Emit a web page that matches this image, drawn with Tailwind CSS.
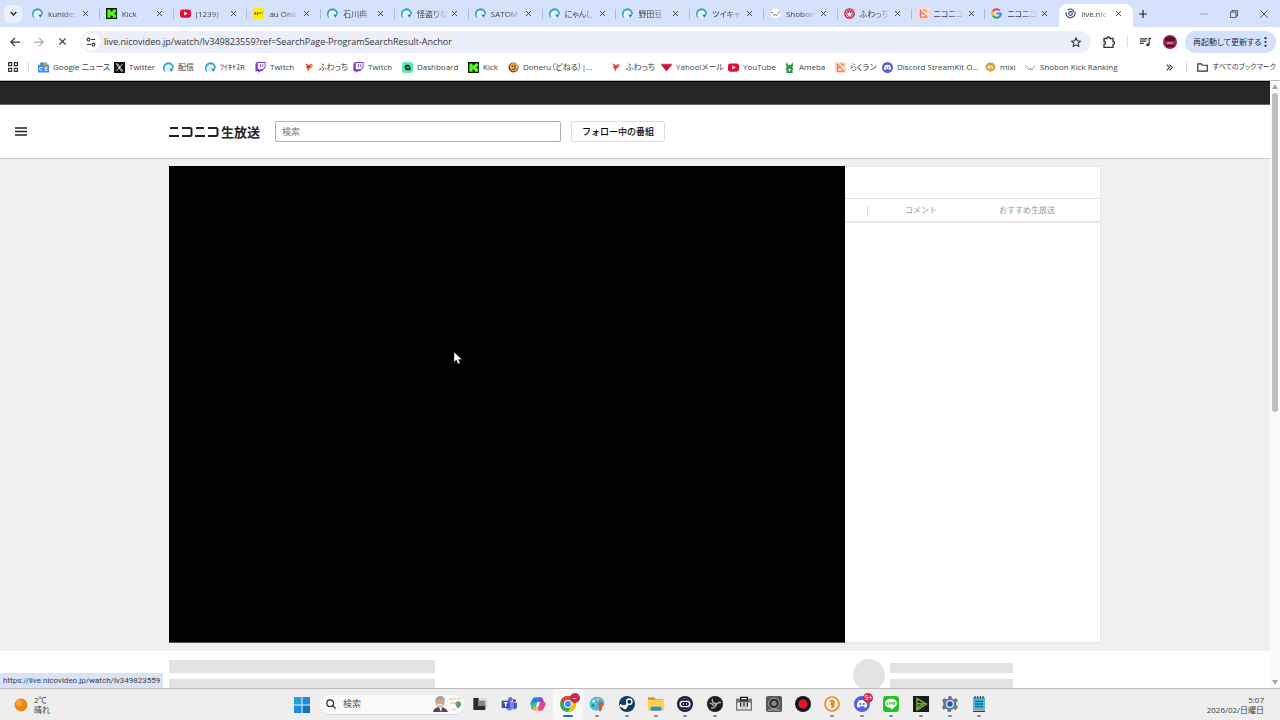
<!DOCTYPE html>
<html lang="ja">
<head>
  <meta charset="UTF-8">
  <meta name="viewport" content="width=device-width, initial-scale=1.0">
  <title>ニコニコ生放送</title>
  <script src="https://cdn.jsdelivr.net/npm/@tailwindcss/browser@4"></script>
</head>
<body class="h-screen flex flex-col overflow-hidden bg-white text-[#3c4043] font-['Open_Sans','Noto_Sans_CJK_JP',sans-serif]">

  <!-- icon sprite -->
  <svg class="hidden" xmlns="http://www.w3.org/2000/svg">
    <symbol id="cast" viewBox="0 0 24 24"><circle cx="12" cy="12" r="11" fill="#dff1f8"/><path d="M5 20A10 10 0 1 1 22 13" fill="none" stroke="#2fa3cc" stroke-width="4"/><path d="M6 19c-3-5 0-11 6-11 4 0 6 3 6 6" fill="none" stroke="#fff" stroke-width="3"/><path d="M14 14h9l-5 7z" fill="#1d86b0"/></symbol>
    <symbol id="kick" viewBox="0 0 24 24"><path fill="#0b1a08" d="M0 0h24v24H0z"/><path fill="#53fc18" d="M3 3h7v5h2V6h3V3h7v7h-3v4h3v7h-7v-3h-3v-2h-2v5H3z"/></symbol>
    <symbol id="youtube" viewBox="0 0 24 24"><rect x="0" y="3" width="24" height="18" rx="5" fill="#e0103a"/><path fill="#fff" d="M9 7.500v9l8-4.500z"/></symbol>
    <symbol id="au" viewBox="0 0 24 24"><path fill="#fff200" d="M0 0h24v24H0z"/><path d="M3 11h4m2 0h3m2 0h3m2 0h2M3 14h2m3 0h3" stroke="#9b5a00" stroke-width="3"/></symbol>
    <symbol id="shobon" viewBox="0 0 24 24"><circle cx="12" cy="12" r="11" fill="#fff"/><path d="M3 9l4 2M21 9l-4 2M7 14c2 3 4 2 5 0 1 2 3 3 5 0" fill="none" stroke="#555" stroke-width="2"/></symbol>
    <symbol id="shobon-flat" viewBox="0 0 24 24"><path d="M2 8l4 4M22 8l-4 4M6 14c2 4 5 3 6 0 1 3 4 4 6 0" fill="none" stroke="#666" stroke-width="2"/></symbol>
    <symbol id="whowatch" viewBox="0 0 24 24"><circle cx="12" cy="12" r="11.500" fill="#c21440"/><circle cx="12" cy="12" r="8" fill="none" stroke="#fff" stroke-width="1.500"/><path fill="#fff" d="M7 9l3 2 2-4 2 4 3-2-1 8H8z"/></symbol>
    <symbol id="rakuran" viewBox="0 0 24 24"><path fill="#ffdccd" d="M0 0h24v24H0z"/><path d="M5 20V4l15 16zM4 14l8-3M12 3l6 5" fill="none" stroke="#d0584b" stroke-width="2"/><path d="M16 4l4 4" stroke="#f2a52c" stroke-width="3"/></symbol>
    <symbol id="google" viewBox="0 0 24 24"><g fill="none" stroke-width="4.500"><path d="M19 5.500A9.500 9.500 0 0 0 4 7.500" stroke="#ea4335"/><path d="M4 7.500a9.500 9.500 0 0 0 0 9" stroke="#fbbc05"/><path d="M4 16.500a9.500 9.500 0 0 0 14 3" stroke="#34a853"/><path d="M18 19.500c2.500-2 3.500-4.500 3.300-7.500H12" stroke="#4285f4"/></g></symbol>
    <symbol id="nico" viewBox="0 0 24 24"><g fill="none" stroke="#334a86" stroke-width="2.500"><path d="M2 9c0 8 5 12 10 12 6 0 11-5 10-13"/><path d="M6 4c6-4 13-1 13 5"/><circle cx="12" cy="12" r="4"/></g></symbol>
    <symbol id="news" viewBox="0 0 24 24"><path fill="#3a9b58" d="M5 1h14v8H5z"/><path fill="#f5b92e" d="M12 2l10 2v6H12z"/><rect y="6" width="24" height="17" rx="2" fill="#4285f4"/><path d="M10 12H6a3 3 0 1 0 3 4M14 11h7M14 14.500h6M14 18h7" fill="none" stroke="#fff" stroke-width="2"/></symbol>
    <symbol id="x" viewBox="0 0 24 24"><path fill="#111" d="M0 0h24v24H0z"/><path d="M5 4h3l11 16h-3zM19 4L5 20" fill="none" stroke="#ddd" stroke-width="2"/></symbol>
    <symbol id="twitch" viewBox="0 0 24 24"><path fill="#7a36d9" d="M5 0L1 4v16h6v4l4-4h4l8-8V0z"/><path fill="#fff" d="M6 2h15v9l-4 4h-4l-3 3v-3H6z"/><path fill="#7a36d9" d="M11 5h2v6h-2zm5 0h2v6h-2z"/></symbol>
    <symbol id="fuwa" viewBox="0 0 24 24"><path fill="#e23b2e" d="M4 4l6 3 8-4-3 6 5 1-8 4-2 7-3-7-3-3 3-2z"/><path d="M13 10l6-4M8 16l2 4" stroke="#f49a3f" stroke-width="3"/><path d="M4 4l4 3" stroke="#7c2d2d" stroke-width="2"/></symbol>
    <symbol id="dash" viewBox="0 0 24 24"><rect width="24" height="24" rx="5" fill="#66e8b3"/><path fill="#134638" d="M5 11l3-5h7l4 5v7H8z"/><path d="M10 12h6" stroke="#66e8b3" stroke-width="2"/></symbol>
    <symbol id="doneru" viewBox="0 0 24 24"><circle cx="12" cy="12" r="11" fill="#713b55"/><circle cx="13" cy="11" r="9" fill="#f3b53c"/><path d="M8 7l3 3M16 6l-2 5M8 15c4 3 8 0 9-3" fill="none" stroke="#713b55" stroke-width="2.500"/></symbol>
    <symbol id="ymail" viewBox="0 0 24 24"><path fill="#e7a4b5" d="M0 3h24v5L12 20 0 8z"/><path fill="#c8143f" d="M0 5h24L12 20z"/></symbol>
    <symbol id="ameba" viewBox="0 0 24 24"><path fill="#2d8c3c" d="M6 0l2 6h8l2-6 2 7-2 5 3 4-3 2 1 6H5l1-6-3-3 3-4-2-5z"/><path d="M9 9h1m4 0h1M8 17h8M12 14v7" stroke="#fff" stroke-width="2"/></symbol>
    <symbol id="discord" viewBox="0 0 24 24"><circle cx="12" cy="12" r="12" fill="#5560dc"/><path fill="#fff" d="M7 7c3-1.500 7-1.500 10 0 2 3 3 6 2.500 9-1.500 1-2.500 1.500-3.500 1.500l-1-2h-6l-1 2c-1 0-2-.5-3.500-1.500C4 13 5 10 7 7z"/><circle cx="9.500" cy="12" r="1.600" fill="#5560dc"/><circle cx="14.500" cy="12" r="1.600" fill="#5560dc"/></symbol>
    <symbol id="mixi" viewBox="0 0 24 24"><path fill="#d7a53c" d="M12 1c7 0 11 4 11 10s-4 9-9 9l-3 3v-3C5 20 1 17 1 11S5 1 12 1z"/><path d="M7 15V9m0 1c2-2 4-1 4 1v4m0-4c1-2 5-3 5 0v4" fill="none" stroke="#fff" stroke-width="2"/></symbol>
    <symbol id="close" viewBox="0 0 10 10"><path d="M1.500 1.500l7 7M8.500 1.500l-7 7" fill="none" stroke="currentColor" stroke-width="1.300"/></symbol>

    <!-- taskbar apps -->
    <symbol id="t-task" viewBox="0 0 24 24"><path fill="#dcdcdc" d="M9 3h14v14H9z"/><path fill="#2b2b2b" d="M2 3h8v11h10v7H2z"/><path fill="#888" d="M9 7h11v8H9z"/></symbol>
    <symbol id="t-teams" viewBox="0 0 24 24"><circle cx="14" cy="5" r="3.500" fill="#6a6fd6"/><circle cx="20" cy="7" r="2.500" fill="#5156b8"/><path fill="#5156b8" d="M17 10h7v6a4 4 0 0 1-5 4z"/><path fill="#7b80e6" d="M8 9h11v8a6 6 0 0 1-11 2z"/><path fill="#4047a8" d="M1 7h12v11H1z"/><path d="M4 10h6M7 10v6" stroke="#fff" stroke-width="2"/></symbol>
    <symbol id="t-copilot" viewBox="0 0 24 24"><path fill="#1a8be0" d="M8 2h7l-4 12H3c-3 0-3-2-2-4l3-6c1-1 2-2 4-2z"/><path fill="#3cc391" d="M3 10h8l-2 7c-1 3-2 4-4 4H4c-3-2-3-8-1-11z"/><path fill="#f9b233" d="M6 16h6l-1 5c-3 2-6 1-7-1z"/><path fill="#7a4fd8" d="M13 2h3c2 0 3 1 4 4l1 3h-8z"/><path fill="#e2498d" d="M13 9h8c3 0 3 3 2 5l-3 6c-1 2-2 2-4 2h-4z"/><path fill="#eee" d="M11 9h4l-2 6h-4z"/></symbol>
    <symbol id="t-chrome" viewBox="0 0 24 24"><circle cx="12" cy="12" r="12" fill="#34a853"/><path fill="#ea4335" d="M1.600 6A12 12 0 0 1 22.400 6H12a6 6 0 0 0-5.200 9z"/><path fill="#fbbc05" d="M22.400 6A12 12 0 0 1 12 24l5.200-9A6 6 0 0 0 17 8.500V6z"/><circle cx="12" cy="12" r="6" fill="#fff"/><circle cx="12" cy="12" r="4.500" fill="#4285f4"/></symbol>
    <symbol id="t-paint" viewBox="0 0 24 24"><path fill="#45bfdc" d="M12 1c7 0 12 5 11 11-1 5-6 2-7 5s-1 5-5 5C5 22 0 17 1 11 2 5 6 1 12 1z"/><circle cx="7" cy="8" r="2" fill="#fff"/><circle cx="13" cy="5" r="2" fill="#f6c744"/><circle cx="6" cy="14" r="2" fill="#3d8b50"/><path fill="#b9694a" d="M17 8c3 0 5 3 4 6l-3 9h-3l-1-9c0-3 1-6 3-6z"/></symbol>
    <symbol id="t-steam" viewBox="0 0 24 24"><circle cx="12" cy="12" r="12" fill="#123a63"/><path d="M1 14l8 3 5-6" fill="none" stroke="#fff" stroke-width="4"/><circle cx="15.500" cy="8.500" r="4" fill="#123a63" stroke="#fff" stroke-width="2"/><circle cx="9" cy="17" r="3" fill="#fff"/></symbol>
    <symbol id="t-folder" viewBox="0 0 24 24"><path fill="#d99a1e" d="M0 2h9l3 3h11v5H0z"/><path fill="#ffd152" d="M0 6h24v16H0z"/><path fill="#2d8cc8" d="M4 16h16v6H4z"/></symbol>
    <symbol id="t-goggle" viewBox="0 0 24 24"><circle cx="12" cy="12" r="12" fill="#17192e"/><circle cx="12" cy="12" r="8.500" fill="none" stroke="#7479a8"/><rect x="5" y="8" width="14" height="8" rx="4" fill="none" stroke="#fff" stroke-width="2"/><path d="M9 12h1.500m3 0H15" stroke="#fff" stroke-width="2"/></symbol>
    <symbol id="t-obs" viewBox="0 0 24 24"><circle cx="12" cy="12" r="12" fill="#1c1c1e"/><g fill="none" stroke="#b5b5b5" stroke-width="2"><path d="M8 4c-1 5 2 8 6 7M21 10c-5-1-8 2-8 6M6 18c4 1 7-2 7-6M4 11c3 0 5 1 6 4"/></g></symbol>
    <symbol id="t-piano" viewBox="0 0 24 24"><path fill="#777" d="M0 4h24v18H0z"/><path fill="#eee" d="M2 10h20v10H2z"/><path fill="#222" d="M6 1h12v7H6zM6 10h2v6H6zm5 0h2v6h-2zm5 0h2v6h-2z"/><path d="M8 4h8" stroke="#fff" stroke-width="2"/><path d="M9.500 16v4m5-4v4" stroke="#777"/></symbol>
    <symbol id="t-mixer" viewBox="0 0 24 24"><rect width="24" height="24" rx="3" fill="#55585c"/><circle cx="12" cy="11" r="8" fill="#2c2e31" stroke="#aaa" stroke-width="1.500"/><circle cx="12" cy="11" r="4" fill="#85888c"/><path d="M3 21h18" stroke="#bbb" stroke-width="1.500"/></symbol>
    <symbol id="t-rec" viewBox="0 0 24 24"><circle cx="12" cy="12" r="12" fill="#151515"/><circle cx="12" cy="12" r="7" fill="#e3142b"/></symbol>
    <symbol id="t-coin" viewBox="0 0 24 24"><circle cx="12" cy="12" r="10.500" fill="#fff1df" stroke="#df8b35" stroke-width="2.500"/><path fill="#df8b35" d="M8 7c2-3 8-2 8 1v5c0 3-2 5-5 6v-6H8l3-3z"/></symbol>
    <symbol id="t-line" viewBox="0 0 24 24"><rect width="24" height="24" rx="5" fill="#20c31f"/><path fill="#fff" d="M12 4c5 0 9 3 9 7 0 5-6 7-9 10v-3c-5 0-9-3-9-7s4-7 9-7z"/><path d="M6.500 9v4H8m2-4v4m2 0V9l3 4V9m3 0h-1.500v4H18m-1.500-2H18" fill="none" stroke="#20c31f" stroke-width="1.200"/></symbol>
    <symbol id="t-play" viewBox="0 0 24 24"><path fill="#191b16" d="M0 0h24v24H0z"/><path d="M6 4l14 8L6 21zM6 11l9 1-9 6" fill="none" stroke="#7bc143" stroke-width="2"/></symbol>
    <symbol id="t-gear" viewBox="0 0 24 24"><path fill="#66788c" d="M10 0h4l1 4 3 1 3-2 3 4-3 3v3l3 3-3 5-4-2-3 2-1 3h-4l-1-4-3-1-3 2-2-4 2-3v-4L0 7l3-4 3 2 3-1z"/><circle cx="12" cy="12" r="6" fill="#dce8f5"/><circle cx="12" cy="12" r="4" fill="#265ba8"/></symbol>
    <symbol id="t-note" viewBox="0 0 24 24"><path fill="#47bfdc" d="M3 2h18v19H3z"/><path d="M6 0v4m4-4v4m4-4v4m4-4v4" stroke="#222" stroke-width="1.500"/><path d="M6 8h12M6 12h12M6 16h12" stroke="#0e6687" stroke-width="2"/><path fill="#7b2032" d="M3 22h18v2H3z"/></symbol>
  </svg>

  <!-- tab strip -->
  <header class="shrink-0 bg-white [font-feature-settings:'palt']">
    <div class="bg-[#d6e2fc] h-[27px] flex items-end">
      <button aria-label="タブを検索" class="self-center ml-1 w-[18px] h-[18px] rounded-md bg-[#eaf0fd] grid place-items-center text-[#222]">
        <svg class="w-[7px] h-[7px]" viewBox="0 0 10 10"><path d="M1 3l4 4 4-4" fill="none" stroke="currentColor" stroke-width="2"/></svg>
      </button>
      <div id="tabs" class="ml-1 flex w-[1107px] h-[23px]"></div>
      <button aria-label="新しいタブ" class="self-center ml-[6px] text-[#222]"><svg class="w-2 h-2" viewBox="0 0 10 10"><path d="M5 0v10M0 5h10" stroke="currentColor" stroke-width="1.500"/></svg></button>
      <div class="self-center ml-auto mr-3 flex items-center gap-[22px] text-[#333]">
        <button aria-label="最小化" class="text-[#8b96ab]"><svg class="w-2 h-2" viewBox="0 0 10 10"><path d="M0 5h10" stroke="currentColor"/></svg></button>
        <button aria-label="元に戻す"><svg class="w-2 h-2" viewBox="0 0 10 10"><path d="M.5 2.500h7v7h-7zM2.500 2.500v-2h7v7h-2" fill="none" stroke="currentColor"/></svg></button>
        <button aria-label="閉じる"><svg class="w-2 h-2" viewBox="0 0 10 10"><path d="M.5.500l9 9m0-9l-9 9" stroke="currentColor"/></svg></button>
      </div>
    </div>

    <!-- toolbar -->
    <div class="flex items-center h-[29px] pl-[10px] pr-1 text-[#333]">
      <button aria-label="戻る"><svg class="w-[10px] h-[10px]" viewBox="0 0 12 12"><path d="M6 1L1 6l5 5M1 6h11" fill="none" stroke="currentColor" stroke-width="1.500"/></svg></button>
      <button aria-label="進む" class="ml-[14px] text-[#aaa]"><svg class="w-[10px] h-[10px]" viewBox="0 0 12 12"><path d="M6 1l5 5-5 5M0 6h11" fill="none" stroke="currentColor" stroke-width="1.500"/></svg></button>
      <button aria-label="読み込みを中止" class="ml-[14px]"><svg class="w-[9px] h-[9px]"><use href="#close"/></svg></button>
      <div class="ml-[14px] flex-1 h-[22px] rounded-full bg-[#eceff9] flex items-center pl-[1px] pr-[10px]">
        <span class="w-[18px] h-[18px] rounded-full bg-white grid place-items-center">
          <svg class="w-[10px] h-[10px]" viewBox="0 0 12 12" fill="none" stroke="currentColor" stroke-width="1.300"><circle cx="3" cy="3" r="1.700"/><path d="M6 3h5M1 9h5"/><circle cx="9" cy="9" r="1.700"/></svg>
        </span>
        <input aria-label="アドレス" class="ml-1 flex-1 text-[9px] outline-none bg-transparent" value="live.nicovideo.jp/watch/lv349823559?ref=SearchPage-ProgramSearchResult-Anchor">
        <button aria-label="ブックマークに追加"><svg class="w-[10px] h-[10px]" viewBox="0 0 24 24"><path d="M12 2l3 7 8 1-6 5 2 8-7-4-7 4 2-8-6-5 8-1z" fill="none" stroke="currentColor" stroke-width="2.500"/></svg></button>
      </div>
      <button aria-label="拡張機能" class="ml-3"><svg class="w-3 h-3" viewBox="0 0 12 12"><path d="M1 2.500h3a1.500 1.500 0 0 1 3 0h3v3a1.500 1.500 0 0 1 0 3v3H1V8.500a1.500 1.500 0 0 0 0-3z" fill="none" stroke="currentColor" stroke-width="1.300"/></svg></button>
      <span class="ml-3 w-px h-[11px] bg-[#d3dbec]"></span>
      <button aria-label="メディアを操作" class="ml-3"><svg class="w-[11px] h-[10px]" viewBox="0 0 12 10"><path d="M0 1.500h8M0 4h7M0 6.500h4M10 8V1h2" fill="none" stroke="currentColor" stroke-width="1.300"/><circle cx="8.500" cy="8" r="1.700" fill="currentColor"/></svg></button>
      <button aria-label="プロフィール" class="ml-3"><svg class="w-[14px] h-[14px]" viewBox="0 0 14 14"><circle cx="7" cy="7" r="7" fill="#a02445"/><path d="M2 4c2-3 8-3 10 0v2H2z" fill="#4a1630"/><path d="M4 7h6v2H4z" fill="#dd6c86"/><path d="M3 11h8" stroke="#4a1630" stroke-width="2"/></svg></button>
      <button class="ml-2 w-[91px] h-[22px] rounded-full bg-[#d3e1fb] flex items-center justify-between pl-2 pr-[9px] text-[8px] text-[#1c2a4a] whitespace-nowrap">再起動して更新する
        <svg class="w-[3px] h-[10px]" viewBox="0 0 3 10" fill="currentColor"><circle cx="1.500" cy="1.200" r="1.100"/><circle cx="1.500" cy="5" r="1.100"/><circle cx="1.500" cy="8.800" r="1.100"/></svg>
      </button>
    </div>

    <!-- bookmarks -->
    <nav aria-label="ブックマーク" class="flex items-center h-6 pl-2 pb-[2px] text-[8px] whitespace-nowrap">
      <button aria-label="アプリ" class="w-[30px] flex items-center gap-[10px]">
        <svg class="w-[10px] h-[10px]" viewBox="0 0 10 10"><path d="M.6.600h3v3h-3zM6.400.600h3v3h-3zM.6 6.400h3v3h-3zM6.400 6.400h3v3h-3z" fill="none" stroke="#333" stroke-width="1.200"/></svg>
        <span class="w-px h-[11px] bg-[#d3dbec]"></span>
      </button>
      <div id="bookmarks" class="flex"></div>
      <button aria-label="その他のブックマーク" class="ml-auto"><svg class="w-[7px] h-[7px]" viewBox="0 0 10 10"><path d="M1 1l4 4-4 4M5 1l4 4-4 4" fill="none" stroke="#333" stroke-width="1.500"/></svg></button>
      <span class="ml-[13px] w-px h-[11px] bg-[#d3dbec]"></span>
      <button class="ml-[10px] mr-1 flex items-center gap-[5px] text-[7px]"><svg class="shrink-0 w-[11px] h-[9px]" viewBox="0 0 12 10"><path d="M.7 1h4l1 1.500h5.600V9H.7z" fill="none" stroke="#333" stroke-width="1.300"/></svg>すべてのブックマーク</button>
    </nav>
  </header>

  <!-- page -->
  <main class="relative flex-1 min-h-0 flex border-t border-[#bbb]">
    <div class="flex-1 overflow-hidden font-['Noto_Sans_CJK_JP',sans-serif]">
      <div class="h-6 bg-[#252525] border-t border-black border-b border-b-[#666]"></div>
      <div class="relative h-[54px] bg-white border-b border-[#c8c8c8] flex items-center">
        <button aria-label="メニュー" class="absolute left-[15px]"><svg class="w-3 h-[9px]" viewBox="0 0 12 9"><path d="M0 1h12M0 4.500h12M0 8h12" stroke="#222" stroke-width="1.300"/></svg></button>
        <div class="mx-auto w-[932px] flex items-center">
          <a href="#" class="flex items-center gap-[2px] text-[13px] leading-4 font-bold text-[#222]">
            <svg role="img" aria-label="ニコニコ" class="w-[50px] h-3" viewBox="0 0 50 12" fill="none" stroke="#222" stroke-width="2"><path d="M1 2h8M0 10h10M13 2h8q1.500 0 1.500 1.500v5Q22.500 10 21 10h-8M27 2h8M26 10h10M39 2h8q1.500 0 1.500 1.500v5Q48.500 10 47 10h-8"/></svg>
            生放送</a>
          <input type="search" aria-label="検索" placeholder="検索" class="ml-[15px] w-[286px] h-[21px] border border-[#b0b0b0] rounded-[2px] px-[6px] text-[9px] placeholder:text-[#777] outline-none">
          <a href="#" class="ml-[10px] w-[94px] h-[21px] border border-[#ddd] rounded-[2px] flex items-center justify-center text-[9px] font-medium text-black whitespace-nowrap">フォロー中の番組</a>
        </div>
      </div>

      <div class="bg-[#f0f0f0] pt-[7px] pb-2">
        <div class="mx-auto w-[932px] h-[477px] flex">
          <div class="flex-1 bg-black border-b border-[#555]"></div>
          <aside class="w-[256px] bg-white border border-l-0 border-[#e5e5e5]">
            <div class="h-8 border-b border-[#e0e0e0]"></div>
            <div class="h-6 border-b-2 border-[#e5e5e5] flex items-center text-[8px] text-[#999]">
              <span class="ml-[22px] w-px h-[9px] bg-[#ddd]"></span>
              <button class="w-[106px]">コメント</button>
              <button class="w-[106px]">おすすめ生放送</button>
            </div>
          </aside>
        </div>
      </div>

      <div class="mx-auto w-[932px] flex pt-[9px]">
        <div class="w-[684px] space-y-[6px]">
          <div class="w-[266px] h-[13px] bg-[#e3e3e3]"></div>
          <div class="w-[266px] h-[13px] bg-[#e3e3e3]"></div>
        </div>
        <div class="w-8 h-8 -mt-px rounded-full bg-[#e3e3e3]"></div>
        <div class="ml-[5px] pt-[3px] space-y-[6px]">
          <div class="w-[123px] h-[10px] bg-[#e3e3e3]"></div>
          <div class="w-[123px] h-[10px] bg-[#e3e3e3]"></div>
        </div>
      </div>
    </div>

    <!-- scrollbar -->
    <div class="w-[10px] bg-[#fafafa] flex flex-col items-center py-[3px]">
      <svg class="w-[6px] h-[5px]" viewBox="0 0 6 5"><path fill="#a5a5a5" d="M3 0l3 5H0z"/></svg>
      <div class="mt-1 w-[6px] h-[319px] rounded-full bg-[#bdbdbd]"></div>
      <svg class="mt-auto w-[6px] h-[5px]" viewBox="0 0 6 5"><path fill="#a5a5a5" d="M0 0h6L3 5z"/></svg>
    </div>

    <div class="absolute left-0 bottom-0 h-[15px] min-w-[162px] bg-[#d9e3f8] px-[3px] text-[8px] leading-[15px] whitespace-nowrap font-['Roboto',sans-serif]">https://live.nicovideo.jp/watch/lv349823559</div>
    <svg class="absolute left-[453px] top-[270px] w-[9px] h-[14px]" viewBox="0 0 9 14"><path fill="#fff" stroke="#333" stroke-width=".5" d="M1 1v10l2.500-2L5 13l2-1-1.500-3.500H9z"/></svg>
  </main>

  <!-- taskbar -->
  <footer class="shrink-0 h-8 bg-[#eeeeee] border-t border-[#bbb] flex items-center text-[8px] leading-3">
    <div class="w-[294px] pl-[14px] flex items-center gap-[6px]">
      <svg class="w-[14px] h-[14px]" viewBox="0 0 14 14"><circle cx="7" cy="7" r="6.500" fill="#e9851b"/><circle cx="5" cy="5" r="3" fill="#f6ac36"/></svg>
      <div class="leading-[10px]">2℃<br>晴れ</div>
    </div>
    <button aria-label="スタート"><svg class="w-4 h-4" viewBox="0 0 16 16"><path fill="#22a0dd" d="M0 0h7.500v7.500H0z"/><path fill="#1a8fd6" d="M8.500 0H16v7.500H8.500zM0 8.500h7.500V16H0z"/><path fill="#1272c0" d="M8.500 8.500H16V16H8.500z"/></svg></button>
    <label class="ml-[9px] w-[146px] h-5 rounded-full bg-[#fafafa] border-b border-[#d5d5d5] flex items-center pl-[7px]">
      <svg class="w-[10px] h-[10px]" viewBox="0 0 12 12"><circle cx="5" cy="5" r="4" fill="none" stroke="#222" stroke-width="1.400"/><path d="M8 8l3.500 3.500" stroke="#222" stroke-width="1.400"/></svg>
      <input aria-label="Windows 検索" placeholder="検索" class="ml-[7px] w-[90px] text-[9px] placeholder:text-[#555] outline-none bg-transparent">
      <svg class="w-[30px] h-4" viewBox="0 0 30 16"><path fill="#4a4b55" d="M0 16c1-4 4-5 7-5s6 1 8 5z"/><path fill="#fff" d="M6 11h3l-1 5z"/><ellipse cx="7" cy="6" rx="4.500" ry="5.500" fill="#d0a68a"/><path fill="#a6a29e" d="M2 6c0-8 11-8 10 0l-1-3H4z"/><path d="M4.500 9h5" stroke="#eee" stroke-width="1.500"/><path d="M16 3h7M17 7h5M24 3l4-1" stroke="#e8b5a0"/><path fill="#59a66b" d="M22 7c3-3 6-2 6 1s-2 4-4 4z"/><path d="M19 13l4 1" stroke="#ccc"/></svg>
    </label>
    <div id="apps" class="grid grid-cols-18 w-[529px] h-full"></div>
    <div class="ml-auto pr-4 text-right leading-[10px]">5:07<br>2026/02/日曜日</div>
  </footer>

  <script>
    const tabs = [
      ['cast', 'kunide:'], ['kick', 'Kick'], ['youtube', '(1239)'], ['au', 'au Onli'], ['cast', '石川典'],
      ['cast', '怪盗りな'], ['cast', 'SATOM'], ['cast', 'にゃんし'], ['cast', '野田豆'], ['cast', 'ツイキャ'],
      ['shobon', 'Shobon'], ['whowatch', 'ふわっち'], ['rakuran', 'ニコニコ'], ['google', 'ニコニコ'], ['nico', 'live.nic'],
    ];
    document.getElementById('tabs').innerHTML = tabs.map(([icon, title], i) => `
      <div class="flex-1 min-w-0 flex items-center pl-[6px] pb-[4px] ${i === tabs.length - 1 ? 'bg-white rounded-t-lg' : ''}">
        <svg class="shrink-0 w-[11px] h-[11px]"><use href="#${icon}"/></svg>
        <a href="#" class="ml-[5px] w-[31px] overflow-hidden whitespace-nowrap text-[8px] [mask-image:linear-gradient(to_right,black_50%,transparent)]">${title}</a>
        <button aria-label="タブを閉じる" class="ml-[3px] text-[#333]"><svg class="w-[7px] h-[7px]"><use href="#close"/></svg></button>
        <span class="ml-auto w-px h-[10px] ${i < tabs.length - 2 ? 'bg-[#a9bbdd]' : ''}"></span>
      </div>`).join('');

    // icon, label, slot width
    const bookmarks = [
      ['news', 'Google ニュース', 76], ['x', 'Twitter', 49], ['cast', '配信', 42], ['cast', 'ﾂｲｷｬｽR', 50],
      ['twitch', 'Twitch', 49], ['fuwa', 'ふわっち', 49], ['twitch', 'Twitch', 49], ['dash', 'Dashboard', 66],
      ['kick', 'Kick', 40], ['doneru', 'Doneru（どねる）|...', 103], ['fuwa', 'ふわっち', 50], ['ymail', 'Yahoo!メール', 67],
      ['youtube', 'YouTube', 56], ['ameba', 'Ameba', 51], ['rakuran', 'らくラン', 47], ['discord', 'Discord StreamKit O...', 103],
      ['mixi', 'mixi', 40], ['shobon-flat', 'Shobon Kick Ranking', 95],
    ];
    document.getElementById('bookmarks').innerHTML = bookmarks.map(([icon, label, w]) => `
      <a href="#" class="flex items-center gap-1" style="width:${w}px">
        <svg class="shrink-0 w-[11px] h-[11px]"><use href="#${icon}"/></svg>${label}
      </a>`).join('');

    // icon, running, badge
    const apps = [
      ['t-task'], ['t-teams'], ['t-copilot'], ['t-chrome', 'active', '–'], ['t-paint', 'on'], ['t-steam', 'on'],
      ['t-folder', 'on'], ['t-goggle', 'on'], ['t-obs', 'on'], ['t-piano'], ['t-mixer'], ['t-rec'], ['t-coin', 'on'],
      ['discord', 'on', '9+'], ['t-line', 'on'], ['t-play', 'on'], ['t-gear', 'on'], ['t-note', 'on'],
    ];
    document.getElementById('apps').innerHTML = apps.map(([icon, state, badge]) => `
      <button aria-label="${icon}" class="relative grid place-items-center pb-px rounded ${state === 'active' ? 'bg-[#f8f8f8]' : ''}">
        <svg class="w-4 h-4"><use href="#${icon}"/></svg>
        ${badge ? `<span class="absolute right-[3px] top-1 min-w-[10px] h-[10px] rounded-full bg-[#c92d4c] text-white text-[7px] leading-[10px]">${badge}</span>` : ''}
        ${state ? `<span class="absolute bottom-[3px] h-[2px] rounded-full ${state === 'active' ? 'w-[10px] bg-[#1976c8]' : 'w-1 bg-[#888]'}"></span>` : ''}
      </button>`).join('');
  </script>
</body>
</html>
